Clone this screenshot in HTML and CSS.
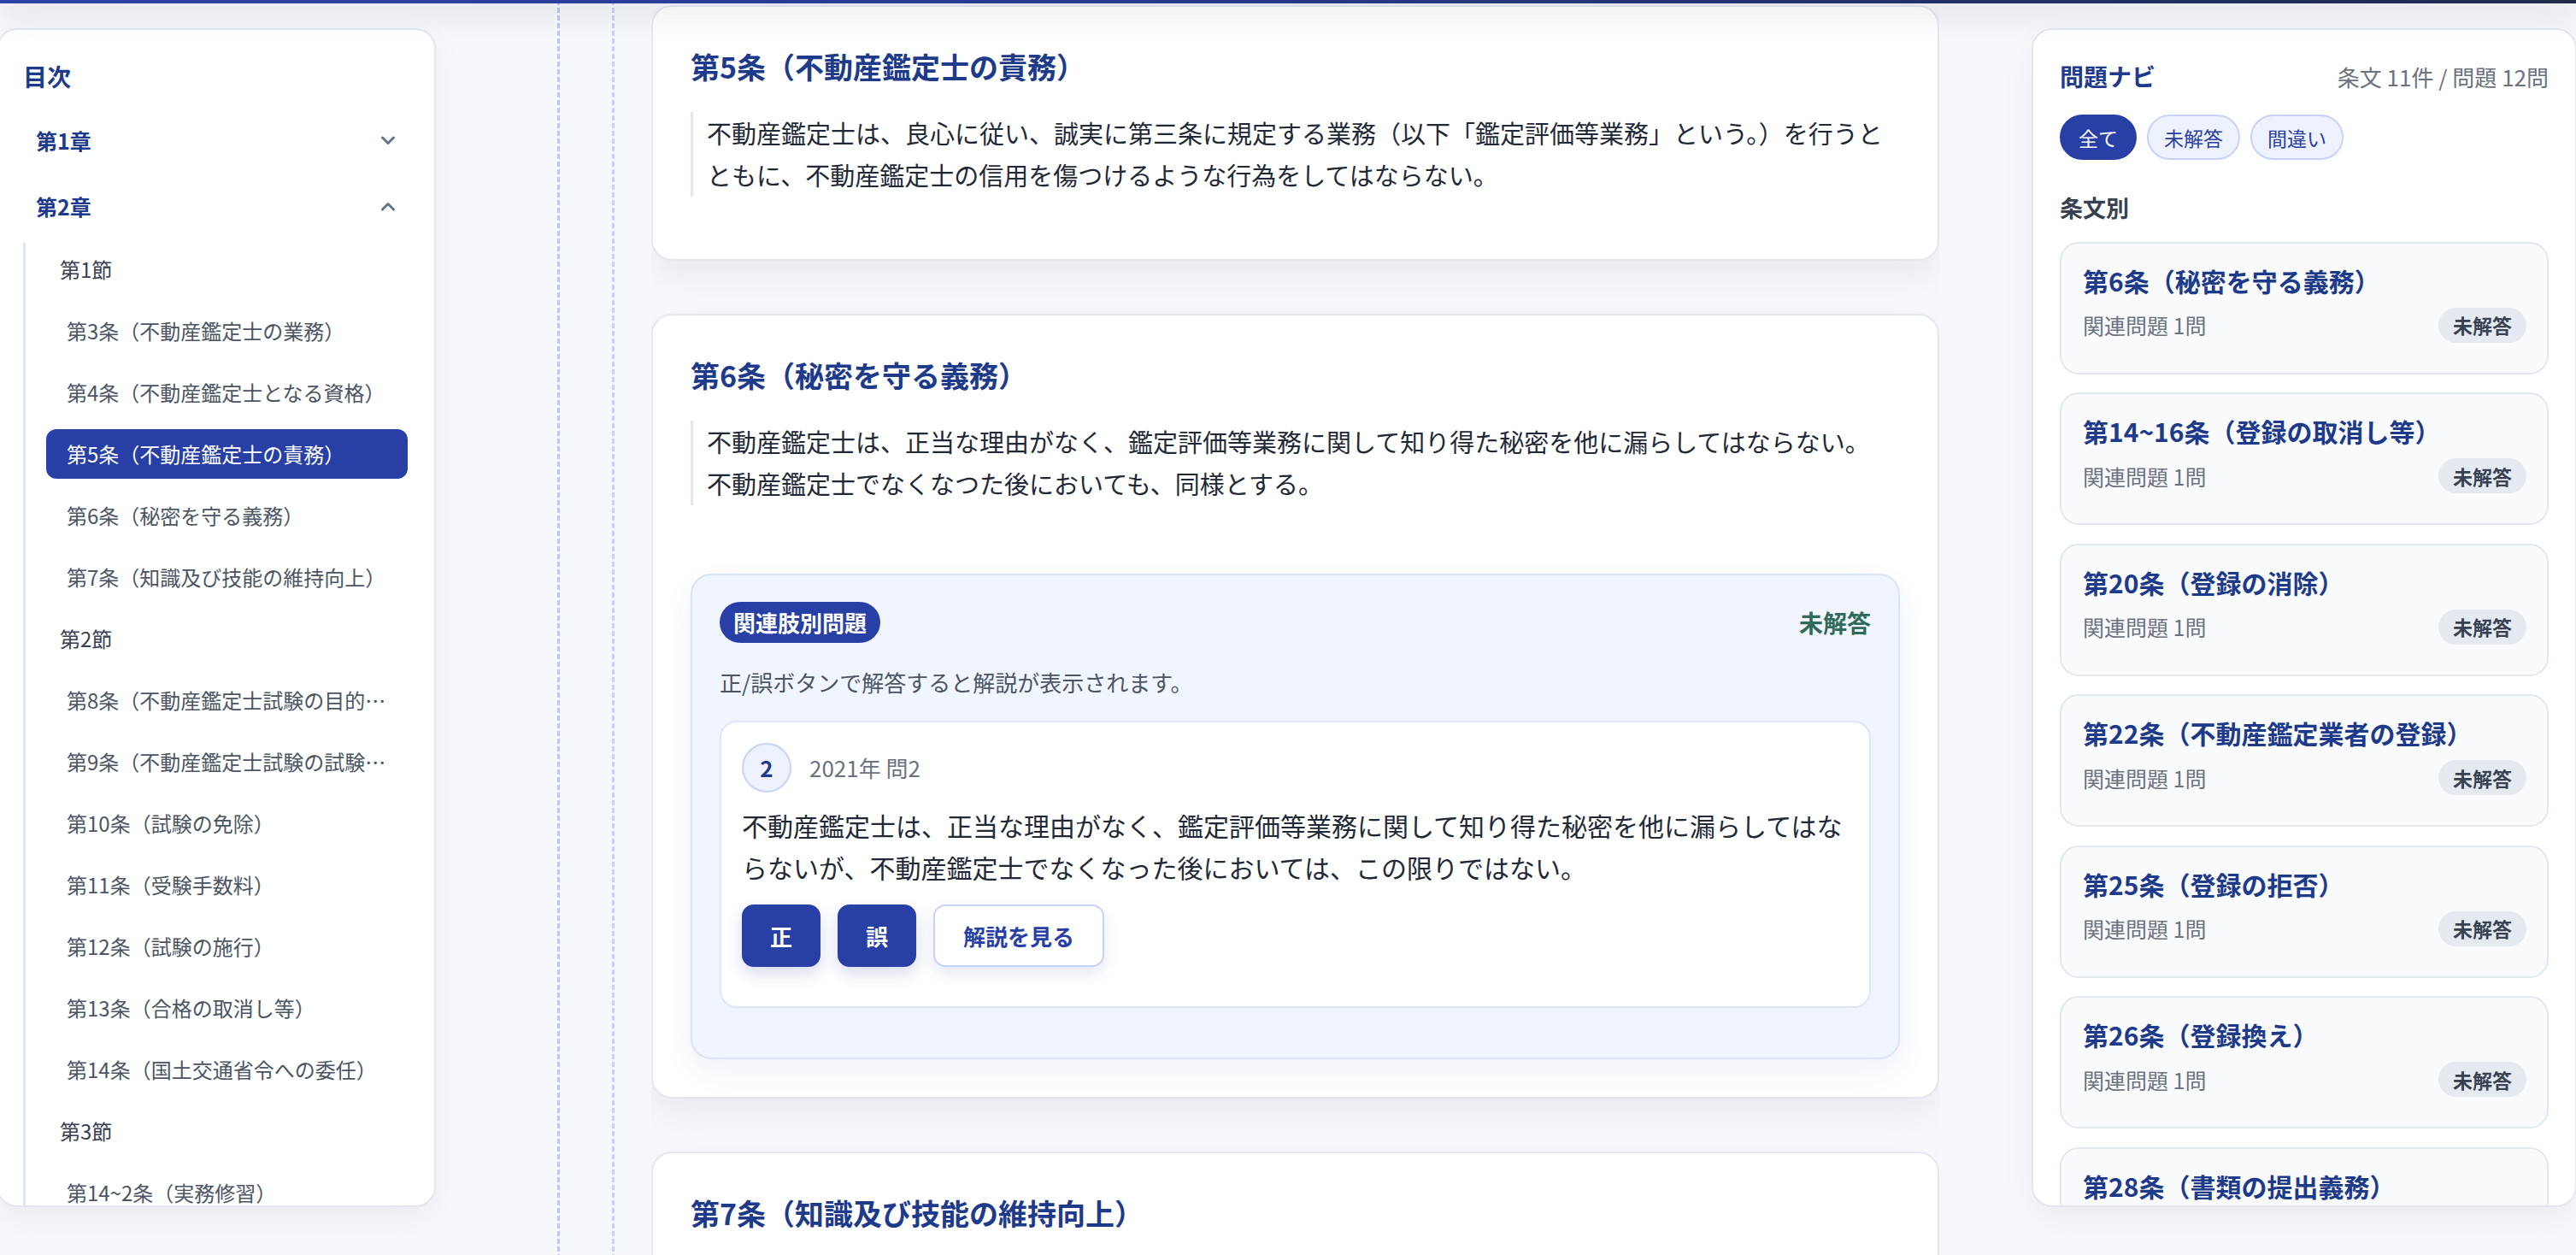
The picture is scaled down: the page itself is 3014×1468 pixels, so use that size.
FILE: index.html
```html
<!DOCTYPE html>
<html lang="ja">
<head>
<meta charset="utf-8">
<title>不動産鑑定評価に関する法律</title>
<link rel="stylesheet" href="styles.css">
</head>
<body>
<div class="topbar"></div>
<div class="layout">
  <aside class="toc">
    <h2 class="toc-title">目次</h2>
    <div class="chapter"><span>第1章</span><svg class="chev" width="18" height="11" viewBox="0 0 18 11"><polyline points="2.5,2 9,8.5 15.5,2"/></svg></div>
    <div class="chapter"><span>第2章</span><svg class="chev" width="18" height="11" viewBox="0 0 18 11"><polyline points="2.5,9 9,2.5 15.5,9"/></svg></div>
    <ul class="subtree">
      <li class="sec">第1節</li>
      <li class="art">第3条（不動産鑑定士の業務）</li>
      <li class="art">第4条（不動産鑑定士となる資格）</li>
      <li class="art active">第5条（不動産鑑定士の責務）</li>
      <li class="art">第6条（秘密を守る義務）</li>
      <li class="art">第7条（知識及び技能の維持向上）</li>
      <li class="sec">第2節</li>
      <li class="art">第8条（不動産鑑定士試験の目的及び方法）</li>
      <li class="art">第9条（不動産鑑定士試験の試験科目）</li>
      <li class="art">第10条（試験の免除）</li>
      <li class="art">第11条（受験手数料）</li>
      <li class="art">第12条（試験の施行）</li>
      <li class="art">第13条（合格の取消し等）</li>
      <li class="art">第14条（国土交通省令への委任）</li>
      <li class="sec">第3節</li>
      <li class="art">第14~2条（実務修習）</li>
      <li class="art">第14~3条（登録の申請）</li>
    </ul>
  </aside>

  <div class="gutter">
    <div class="dash dash-a"></div>
    <div class="dash dash-b"></div>
  </div>

  <main class="content">
    <section class="article">
      <h2 class="art-title">第5条（不動産鑑定士の責務）</h2>
      <blockquote class="art-text">不動産鑑定士は、良心に従い、誠実に第三条に規定する業務（以下「鑑定評価等業務」という。）を行うとともに、不動産鑑定士の信用を傷つけるような行為をしてはならない。</blockquote>
    </section>

    <section class="article">
      <h2 class="art-title">第6条（秘密を守る義務）</h2>
      <blockquote class="art-text">不動産鑑定士は、正当な理由がなく、鑑定評価等業務に関して知り得た秘密を他に漏らしてはならない。<br>不動産鑑定士でなくなつた後においても、同様とする。</blockquote>
      <div class="qpanel">
        <div class="qpanel-head">
          <span class="qbadge">関連肢別問題</span>
          <span class="qstate">未解答</span>
        </div>
        <p class="qhint">正/誤ボタンで解答すると解説が表示されます。</p>
        <div class="qcard">
          <div class="qmeta">
            <span class="qnum">2</span>
            <span class="qsrc">2021年 問2</span>
          </div>
          <p class="qtext">不動産鑑定士は、正当な理由がなく、鑑定評価等業務に関して知り得た秘密を他に漏らしてはならないが、不動産鑑定士でなくなった後においては、この限りではない。</p>
          <div class="qactions">
            <button class="btn btn-judge">正</button>
            <button class="btn btn-judge">誤</button>
            <button class="btn btn-explain">解説を見る</button>
          </div>
        </div>
      </div>
    </section>

    <section class="article">
      <h2 class="art-title">第7条（知識及び技能の維持向上）</h2>
      <blockquote class="art-text">不動産鑑定士は、良質な鑑定評価等業務を行うため、その知識及び技能の維持向上に努めなければならない。</blockquote>
    </section>
  </main>

  <aside class="navi">
    <div class="navi-head">
      <h2 class="navi-title">問題ナビ</h2>
      <span class="navi-count">条文 11件 / 問題 12問</span>
    </div>
    <div class="filters">
      <button class="pill active">全て</button>
      <button class="pill">未解答</button>
      <button class="pill">間違い</button>
    </div>
    <h3 class="by-art">条文別</h3>
    <ul class="nav-list">
      <li class="nav-item"><div class="nav-title">第6条（秘密を守る義務）</div><div class="nav-row"><span class="nav-sub">関連問題 1問</span><span class="status">未解答</span></div></li>
      <li class="nav-item"><div class="nav-title">第14~16条（登録の取消し等）</div><div class="nav-row"><span class="nav-sub">関連問題 1問</span><span class="status">未解答</span></div></li>
      <li class="nav-item"><div class="nav-title">第20条（登録の消除）</div><div class="nav-row"><span class="nav-sub">関連問題 1問</span><span class="status">未解答</span></div></li>
      <li class="nav-item"><div class="nav-title">第22条（不動産鑑定業者の登録）</div><div class="nav-row"><span class="nav-sub">関連問題 1問</span><span class="status">未解答</span></div></li>
      <li class="nav-item"><div class="nav-title">第25条（登録の拒否）</div><div class="nav-row"><span class="nav-sub">関連問題 1問</span><span class="status">未解答</span></div></li>
      <li class="nav-item"><div class="nav-title">第26条（登録換え）</div><div class="nav-row"><span class="nav-sub">関連問題 1問</span><span class="status">未解答</span></div></li>
      <li class="nav-item"><div class="nav-title">第28条（書類の提出義務）</div><div class="nav-row"><span class="nav-sub">関連問題 1問</span><span class="status">未解答</span></div></li>
    </ul>
  </aside>
</div>
</body>
</html>
```

FILE: styles.css
```css
* { box-sizing: border-box; }

html, body {
  margin: 0;
  padding: 0;
  height: 100%;
  overflow: hidden;
}

body {
  background: #f7f8fb;
  font-family: "Noto Sans CJK JP", "Noto Sans", sans-serif;
  color: #1f2937;
}

h2, h3, p, ul, blockquote { margin: 0; padding: 0; }
ul { list-style: none; }
button { font-family: inherit; cursor: pointer; }

.topbar {
  position: fixed;
  top: 0;
  left: 0;
  right: 0;
  height: 4px;
  z-index: 10;
  background: linear-gradient(90deg, #2c42a6 0%, #283a8e 45%, #1f2a4c 100%);
  box-shadow: 0 0 42px 4px rgba(15, 23, 42, 0.22);
}

.layout {
  display: flex;
  height: 100vh;
  margin-left: -4px;
}

/* ---------- Left: table of contents ---------- */
.toc {
  flex: 0 0 514px;
  margin-top: 33px;
  height: calc(100vh - 89px);
  background: #fff;
  border: 2px solid #e3e8f0;
  border-radius: 24px;
  padding: 34px 31px 0 29px;
  overflow: hidden;
  box-shadow: 0 14px 40px rgba(15, 23, 42, 0.05);
}

.toc-title {
  font-size: 28px;
  line-height: 40px;
  font-weight: 700;
  color: #1e3a8a;
}

.chapter {
  display: flex;
  align-items: center;
  justify-content: space-between;
  height: 58px;
  padding: 0 14px 0 15px;
  font-size: 25px;
  font-weight: 700;
  color: #1e3a8a;
}
.toc-title + .chapter { margin-top: 26px; }
.chapter + .chapter { margin-top: 19px; }

.chev polyline {
  fill: none;
  stroke: #64748b;
  stroke-width: 3;
  stroke-linecap: round;
  stroke-linejoin: round;
}

.subtree {
  margin-top: 14px;
  border-left: 3px solid #dfe6fb;
  padding: 2px 0 0 24px;
  display: flex;
  flex-direction: column;
  gap: 14px;
}

.subtree li {
  height: 58px;
  line-height: 58px;
  font-size: 24px;
  white-space: nowrap;
  overflow: hidden;
  text-overflow: ellipsis;
  border-radius: 12px;
}

.sec {
  padding: 0 16px;
  color: #374151;
}

.art {
  padding: 0 25px 0 24px;
  color: #4b5563;
}

.art.active {
  background: #283fa5;
  color: #fff;
}

/* ---------- Gutter with dashed guides ---------- */
.gutter {
  flex: 0 0 252px;
  display: flex;
}

.dash {
  width: 3px;
  height: 100%;
}
.dash-a {
  margin-left: 142px;
  background: repeating-linear-gradient(to bottom, #bfc9f5 0 6px, transparent 6px 9px);
}
.dash-b {
  margin-left: 61px;
  background: repeating-linear-gradient(to bottom, #c2d5f6 0 6px, transparent 6px 9px);
}

/* ---------- Center: articles ---------- */
.content {
  flex: 0 0 1507px;
  padding-top: 5.5px;
  display: flex;
  flex-direction: column;
  gap: 62px;
  overflow: hidden;
}

.article {
  flex-shrink: 0;
  background: #fff;
  border: 2px solid #e3e8f1;
  border-radius: 24px;
  padding: 46px 44px 44px;
  box-shadow: 0 18px 44px rgba(15, 23, 42, 0.06);
}

.art-title {
  font-size: 34px;
  line-height: 48px;
  font-weight: 700;
  color: #1e3a8a;
  margin-bottom: 29px;
}

.art-text {
  border-left: 3px solid #e1e7f5;
  padding-left: 16px;
  font-size: 29px;
  line-height: 49.5px;
  color: #1f2937;
  margin-bottom: 29px;
}

.qpanel {
  margin-top: 80px;
  background: #f0f5ff;
  border: 2px solid #dbe4fb;
  border-radius: 24px;
  padding: 31px 32px 58px;
  box-shadow: 0 14px 34px rgba(40, 63, 165, 0.07);
}

.qpanel-head {
  display: flex;
  align-items: center;
  justify-content: space-between;
  height: 48px;
}

.qbadge {
  display: inline-flex;
  align-items: center;
  height: 48px;
  padding: 0 16px;
  border-radius: 24px;
  background: #283fa5;
  color: #fff;
  font-size: 26px;
  font-weight: 700;
}

.qstate {
  font-size: 28px;
  font-weight: 700;
  color: #2f6b58;
}

.qhint {
  margin-top: 26.5px;
  font-size: 26px;
  line-height: 40px;
  color: #4b5563;
}

.qcard {
  margin-top: 24.5px;
  background: #fff;
  border: 2px solid #dde6fb;
  border-radius: 20px;
  padding: 24px 24px 46px;
}

.qmeta {
  display: flex;
  align-items: center;
  gap: 21px;
}

.qnum {
  width: 58px;
  height: 58px;
  border-radius: 50%;
  background: #eef2ff;
  border: 2px solid #c7d2fe;
  display: flex;
  align-items: center;
  justify-content: center;
  font-size: 26px;
  font-weight: 700;
  color: #1e3a8a;
}

.qsrc {
  font-size: 26px;
  color: #6b7280;
}

.qtext {
  margin-top: 14px;
  font-size: 30px;
  line-height: 49.5px;
  color: #1f2937;
}

.qactions {
  margin-top: 18px;
  display: flex;
  gap: 20px;
}

.btn {
  height: 73px;
  border-radius: 14px;
  font-size: 26px;
  font-weight: 700;
  border: 2px solid #283fa5;
  box-shadow: 0 8px 18px rgba(40, 63, 165, 0.18);
}

.btn-judge {
  width: 92px;
  background: #283fa5;
  color: #fff;
}

.btn-explain {
  padding: 0 33px;
  background: #fff;
  border-color: #c7d2fe;
  color: #283fa5;
  box-shadow: 0 8px 18px rgba(40, 63, 165, 0.12);
}

/* ---------- Right: question navigator ---------- */
.navi {
  flex: 0 0 638px;
  margin-left: 108px;
  margin-top: 33px;
  height: calc(100vh - 89px);
  background: #fff;
  border: 2px solid #e3e8f0;
  border-radius: 24px;
  padding: 34px 31px 0 31px;
  overflow: hidden;
  box-shadow: 0 14px 40px rgba(15, 23, 42, 0.05);
}

.navi-head {
  display: flex;
  align-items: center;
  justify-content: space-between;
  height: 40px;
}

.navi-title {
  font-size: 28px;
  font-weight: 700;
  color: #1e3a8a;
}

.navi-count {
  font-size: 26px;
  color: #6b7280;
}

.filters {
  margin-top: 25px;
  display: flex;
  gap: 12px;
}

.pill {
  height: 53px;
  padding: 0 18px;
  border-radius: 27px;
  border: 2px solid #c7d2fe;
  background: #eef2ff;
  color: #283fa5;
  font-size: 23px;
}

.pill.active {
  padding: 0 20px;
  background: #283fa5;
  border-color: #283fa5;
  color: #fff;
}

.by-art {
  margin-top: 35.5px;
  font-size: 27px;
  line-height: 40px;
  font-weight: 700;
  color: #374151;
}

.nav-list {
  margin-top: 20px;
  display: flex;
  flex-direction: column;
  gap: 21.5px;
}

.nav-item {
  background: #f8fafc;
  border: 2px solid #e2e8f0;
  border-radius: 22px;
  padding: 24px 24px 35px 25px;
}

.nav-title {
  font-size: 30px;
  line-height: 38px;
  font-weight: 700;
  color: #1e3a8a;
  white-space: nowrap;
}

.nav-row {
  margin-top: 13px;
  display: flex;
  align-items: center;
  justify-content: space-between;
}

.nav-sub {
  font-size: 25px;
  color: #6b7280;
}

.status {
  display: inline-flex;
  align-items: center;
  height: 41px;
  padding: 0 17px;
  border-radius: 21px;
  background: #e5e9f0;
  color: #374151;
  font-size: 23px;
  font-weight: 700;
}
```
